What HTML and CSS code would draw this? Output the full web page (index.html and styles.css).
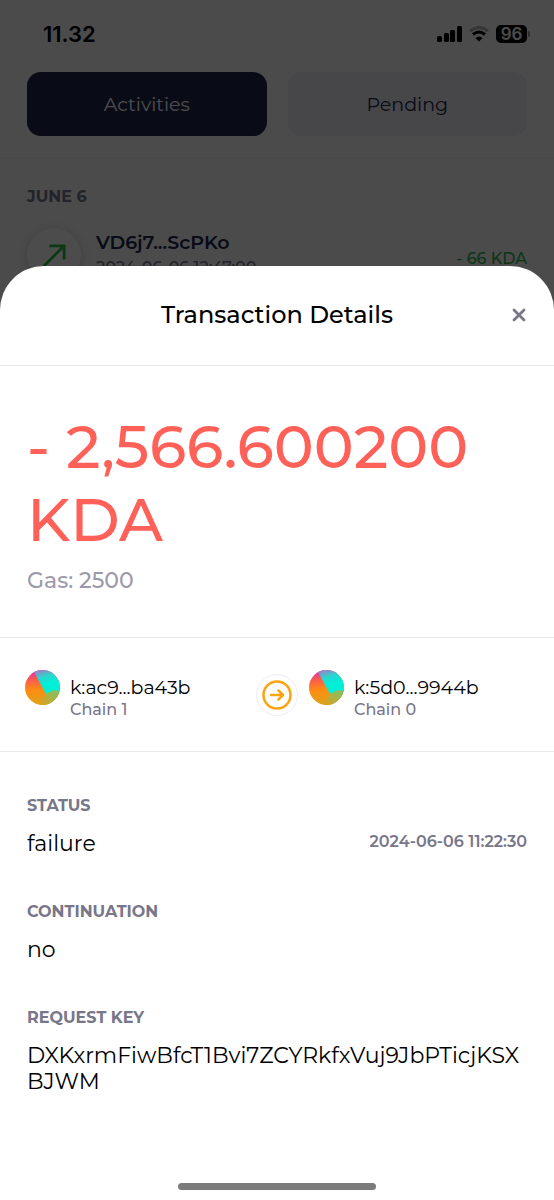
FILE: index.html
```
<!DOCTYPE html>
<html lang="en">
<head>
<meta charset="utf-8">
<meta name="viewport" content="width=device-width, initial-scale=1">
<title>Transaction Details</title>
<link rel="stylesheet" href="styles.css">
</head>
<body>
<svg width="0" height="0" class="defs" aria-hidden="true">
  <defs>
    <linearGradient id="warm" x1=".4" y1="0" x2=".5" y2="1"><stop offset="0" stop-color="#d62fb0"/><stop offset=".25" stop-color="#fb5a50"/><stop offset=".55" stop-color="#ff8c12"/><stop offset="1" stop-color="#d9a51c"/></linearGradient>
    <linearGradient id="cool" x1=".2" y1="0" x2=".5" y2="1"><stop offset="0" stop-color="#a878c8"/><stop offset=".3" stop-color="#2fd3cc"/><stop offset=".6" stop-color="#00efd8"/></linearGradient>
    <linearGradient id="olive" x1="1" y1="0" x2="0" y2="1"><stop offset="0" stop-color="#6cc878"/><stop offset="1" stop-color="#e0a01a"/></linearGradient>
    <clipPath id="disc"><circle cx="17.500" cy="17.500" r="17.500"/></clipPath>
    <symbol id="avatar" viewBox="0 0 35 35"><g clip-path="url(#disc)"><path fill="url(#warm)" d="M0 0H35V35H0Z"/><path fill="url(#olive)" d="M21 24 35 17V35H15Z"/><path fill="url(#cool)" d="M8 0H35V21L29 20 21 24Z"/></g></symbol>
  </defs>
</svg>
<div class="screen">
  <div class="status-bar">
    <span class="clock">11.32</span>
    <div class="indicators">
      <svg width="25" height="16" viewBox="0 0 25 16" aria-hidden="true"><rect x="0" y="10" width="5" height="6" rx="1.5"/><rect x="7" y="7" width="5" height="9" rx="1.5"/><rect x="13" y="4" width="5" height="12" rx="1.5"/><rect x="20" y="0" width="5" height="16" rx="1.5"/></svg>
      <svg width="20" height="16" viewBox="0 0 20 16" fill="none" aria-hidden="true"><path d="M1 5Q10-2 19 5" stroke="#000" stroke-opacity=".28" stroke-width="3"/><path d="M4 8.500Q10 3.500 16 8.500" stroke="#000" stroke-width="3"/><path d="M6.500 12Q10 9 13.500 12L10 15.500Z" fill="#000"/></svg>
      <div class="battery"><span class="level">96</span><span class="battery-tip"></span></div>
    </div>
  </div>
  <div class="tabs">
    <button class="tab tab-active" type="button">Activities</button>
    <button class="tab" type="button">Pending</button>
  </div>
  <div class="activity">
    <h2 class="label">JUNE 6</h2>
    <div class="activity-row">
      <span class="activity-icon"><svg width="24" height="24" viewBox="0 0 26 26" fill="none" stroke="currentColor" stroke-width="3" aria-hidden="true"><path d="M2 25 24 3M8 3H24V18"/></svg></span>
      <div class="activity-text"><strong class="activity-name">VD6j7...ScPKo</strong><span class="activity-time">2024-06-06 12:47:00</span></div>
      <span class="activity-amount">- 66 KDA</span>
    </div>
  </div>
</div>

<div class="overlay">
  <section class="sheet" role="dialog" aria-labelledby="title">
    <header class="sheet-header">
      <h1 class="title" id="title">Transaction Details</h1>
      <button class="close" type="button" aria-label="Close"><svg width="14" height="14" viewBox="0 0 14 14" stroke="currentColor" stroke-width="2.800" stroke-linecap="round" aria-hidden="true"><path d="M2 2 12 12M12 2 2 12"/></svg></button>
    </header>
    <div class="summary">
      <p class="amount">- 2,566.600200 KDA</p>
      <p class="gas">Gas: 2500</p>
    </div>
    <div class="transfer">
      <div class="account">
        <svg class="avatar" aria-hidden="true"><use href="#avatar"/></svg>
        <div class="account-text"><span class="account-name">k:ac9...ba43b</span><span class="chain">Chain 1</span></div>
      </div>
      <span class="direction"><svg width="30" height="30" viewBox="0 0 30 30" fill="none" stroke="currentColor" stroke-width="2.500" stroke-linecap="round" stroke-linejoin="round" aria-hidden="true"><circle cx="15" cy="15" r="13.500"/><path d="M9 15H21M16.500 10.500 21 15 16.500 19.500"/></svg></span>
      <div class="account">
        <svg class="avatar" aria-hidden="true"><use href="#avatar"/></svg>
        <div class="account-text"><span class="account-name">k:5d0...9944b</span><span class="chain">Chain 0</span></div>
      </div>
    </div>
    <dl class="details">
      <div class="detail"><dt class="label">STATUS</dt><dd class="value value-split"><span>failure</span><time class="timestamp">2024-06-06 11:22:30</time></dd></div>
      <div class="detail"><dt class="label">CONTINUATION</dt><dd class="value">no</dd></div>
      <div class="detail"><dt class="label">REQUEST KEY</dt><dd class="value">DXKxrmFiwBfcT1Bvi7ZCYRkfxVuj9JbPTicjKSXBJWM</dd></div>
    </dl>
    <div class="home-indicator"></div>
  </section>
</div>
</body>
</html>
```
FILE: styles.css
```
* { box-sizing: border-box; }
body, h1, h2, p, dl, dd { margin: 0; }
body {
  min-height: 100vh;
  background: #fafafc;
  color: #000;
  font-family: Montserrat, Inter, sans-serif;
  overflow: hidden;
}
button { border: 0; padding: 0; font: inherit; cursor: pointer; }
svg { display: block; }
.defs { position: absolute; }

.screen { height: 100vh; overflow: hidden; }
.status-bar {
  display: flex;
  align-items: center;
  justify-content: space-between;
  padding: 20px 24px 0 43px;
  font-family: Inter, sans-serif;
}
.clock { font-size: 22px; line-height: 28px; font-weight: 600; }
.indicators { display: flex; align-items: center; gap: 7px; }
.battery { display: flex; align-items: center; gap: 1px; }
.level {
  width: 31px;
  border-radius: 5px;
  background: #000;
  color: #fff;
  font-size: 17px;
  line-height: 18px;
  font-weight: 600;
  text-align: center;
}
.battery-tip { width: 2px; height: 6px; border-radius: 0 2px 2px 0; background: #999; }

.tabs {
  display: grid;
  grid-template-columns: 1fr 1fr;
  gap: 21px;
  padding: 24px 27px 22px;
  border-bottom: 1px solid #f2f2f6;
}
.tab {
  height: 64px;
  border-radius: 14px;
  background: #edebf6;
  color: #20264e;
  font-size: 19px;
}
.tab-active { background: #20264e; color: #fff; }

.label {
  color: #787689;
  font-size: 16px;
  line-height: 20px;
  font-weight: 700;
}
.activity { padding: 28px 27px; }
.activity-row { display: flex; gap: 15px; padding-top: 21px; }
.activity-icon {
  display: grid;
  place-items: center;
  width: 54px;
  height: 54px;
  border-radius: 50%;
  background: #fff;
  box-shadow: 0 2px 10px rgb(0 0 0 / 18%);
  color: #25c04b;
}
.activity-text { display: flex; flex: 1; flex-direction: column; }
.activity-name { color: #20264e; font-size: 19px; line-height: 30px; font-weight: 600; }
.activity-time { color: #787689; font-size: 16px; line-height: 20px; font-weight: 500; }
.activity-amount { padding-top: 20px; color: #27b34a; font-size: 16px; line-height: 22px; font-weight: 500; }

.overlay {
  position: fixed;
  inset: 0;
  display: flex;
  align-items: flex-end;
  background: rgb(0 0 0 / 70%);
}
.sheet { width: 100%; border-radius: 44px 44px 0 0; background: #fff; }
.sheet-header {
  display: grid;
  grid-template-columns: 1fr auto 1fr;
  align-items: center;
  padding: 33px 28px 34px;
  border-bottom: 1px solid #e9e9ee;
}
.title { grid-column: 2; font-size: 24px; line-height: 32px; font-weight: 500; }
.close { justify-self: end; background: none; color: #787689; }

.summary { padding: 44px 27px 42px; border-bottom: 1px solid #e9e9ee; }
.amount { color: #ff6058; font-size: 60px; line-height: 73px; font-weight: 500; }
.gas { padding-top: 11px; color: #9c9aaa; font-size: 22px; line-height: 28px; font-weight: 500; }

.transfer {
  display: grid;
  grid-template-columns: 1fr auto 1fr;
  column-gap: 11px;
  padding: 32px 25px;
  border-bottom: 1px solid #e9e9ee;
}
.account { display: flex; gap: 10px; }
.avatar { width: 35px; height: 35px; }
.account-text { display: flex; flex-direction: column; padding-top: 6px; }
.account-name { font-size: 19px; line-height: 24px; }
.chain { color: #787689; font-size: 16px; line-height: 19px; font-weight: 500; }
.direction {
  display: grid;
  place-items: center;
  align-self: center;
  width: 42px;
  height: 42px;
  border: 1px solid #ededfa;
  border-radius: 50%;
  color: #fca311;
}

.details { display: grid; gap: 40px; padding: 44px 27px 83px; }
.value {
  padding-top: 15px;
  font-size: 22px;
  line-height: 26px;
  overflow-wrap: anywhere;
}
.detail { padding-bottom: 5px; }
.value-split { display: flex; justify-content: space-between; }
.timestamp { color: #787689; font-size: 16px; line-height: 22px; font-weight: 600; }
.home-indicator {
  width: 198px;
  height: 7px;
  margin: 0 auto 10px;
  border-radius: 4px;
  background: #7b7b7b;
}
```
